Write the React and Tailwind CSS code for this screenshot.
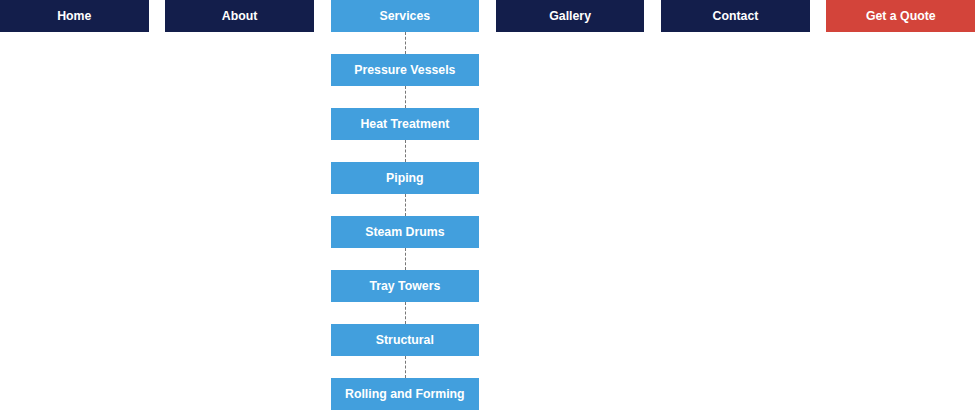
export default function App() {
  const links = ["Home", "About", "Services", "Gallery", "Contact", "Get a Quote"];
  const services = [
    "Pressure Vessels",
    "Heat Treatment",
    "Piping",
    "Steam Drums",
    "Tray Towers",
    "Structural",
    "Rolling and Forming",
  ];
  const font = { fontFamily: '"Liberation Sans", Arial, sans-serif' };
  const label = "h-8 pt-px flex items-center justify-center text-white text-[12.3px] font-bold";

  return (
    <div className="w-[975px] h-[410px] bg-white overflow-hidden" style={font}>
      <nav className="grid grid-cols-6 gap-x-[16.8px] items-start">
        {links.map((name) => {
          if (name === "Services") {
            return (
              <div key={name} className="flex flex-col items-stretch">
                <div className={`${label} bg-[#429fdd]`}>{name}</div>
                {services.map((s) => (
                  <div key={s} className="flex flex-col items-stretch">
                    <div className="h-[22px] flex justify-center">
                      <div className="h-full ml-[2px] border-l border-dashed border-[#777]" />
                    </div>
                    <div className={`${label} bg-[#429fdd]`}>{s}</div>
                  </div>
                ))}
              </div>
            );
          }
          const bg = name === "Get a Quote" ? "bg-[#d3443a]" : "bg-[#131e4b]";
          return (
            <div key={name} className={`${label} ${bg}`}>
              {name}
            </div>
          );
        })}
      </nav>
    </div>
  );
}
